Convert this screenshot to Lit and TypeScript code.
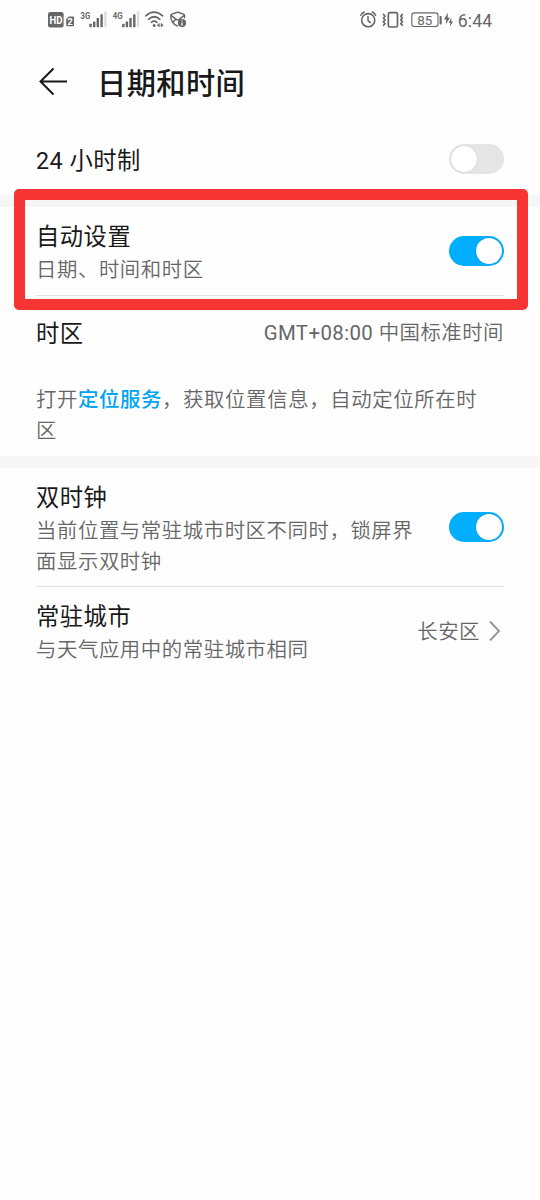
import { LitElement, html, css, svg, nothing } from "lit";
import { customElement, property } from "lit/decorators.js";

@customElement("toggle-switch")
class ToggleSwitch extends LitElement {
  @property({ type: Boolean }) on = false;
  static styles = css`
    :host { display: block; flex: none; }
    .track { box-sizing: border-box; width: 55px; height: 30px; border-radius: 15px; padding: 2px; background: #e5e5e5; display: flex; justify-content: flex-start; }
    .track.on { background: #00aeff; justify-content: flex-end; }
    .knob { width: 26px; height: 26px; border-radius: 50%; background: #fff; box-shadow: 0 0 1.5px rgba(0, 0, 0, 0.18); }
  `;
  render() {
    return html`<div class="track ${this.on ? "on" : ""}"><div class="knob"></div></div>`;
  }
}

@customElement("status-bar")
class StatusBar extends LitElement {
  static styles = css`
    :host { display: block; height: 40px; }
    .bar { display: flex; justify-content: space-between; padding: 0 40px; }
    svg { display: block; }
    text { font-family: Roboto, "Liberation Sans", sans-serif; fill: #666; }
    .inv { fill: #fff; font-weight: 700; }
    .net { font-weight: 700; font-size: 9.8px; }
    .f { fill: #666; }
    .s { fill: none; stroke: #666; stroke-linecap: round; stroke-linejoin: round; }
    .dim { fill: #dcdcdc; }
  `;
  signal(x: number) {
    return svg`<rect class="f" x=${x} y="23.7" width="2.4" height="3.5" rx=".6"/>
      <rect class="f" x=${x + 3.6} y="21.6" width="2.4" height="5.6" rx=".6"/>
      <rect class="f" x=${x + 7.2} y="18" width="2.4" height="9.2" rx=".6"/>
      <rect class="f" x=${x + 11} y="14.2" width="2.4" height="13" rx=".6"/>
      <rect class="dim" x=${x + 14.9} y="11.2" width="2.2" height="16" rx=".6"/>`;
  }
  render() {
    return html`<div class="bar">
      <svg width="150" height="40" viewBox="40 0 150 40">
        <rect class="f" x="48" y="12" width="15.6" height="15.4" rx="2.2"/>
        <text class="inv" x="49.4" y="23.6" font-size="11" textLength="13" lengthAdjust="spacingAndGlyphs">HD</text>
        <path class="f" d="M68.8 16.4h4q1.2 0 1.2 1.2v7.4q0 1.2-1.2 1.2h-5.4q-1.2 0-1.2-1.2v-6z"/>
        <text class="inv" x="70.1" y="25" font-size="9.6" text-anchor="middle">2</text>
        <text class="net" x="80.6" y="18.9" textLength="9.6" lengthAdjust="spacingAndGlyphs">3G</text>
        ${this.signal(89.4)}
        <text class="net" x="112.8" y="18.9" textLength="9.8" lengthAdjust="spacingAndGlyphs">4G</text>
        ${this.signal(122.1)}
        <path class="s" stroke-width="1.7" d="M145.8 15.8Q154.2 8.4 162.6 15.8M148.5 19.3Q154.2 14.2 159.9 19.3M151.4 22.3Q154.2 20 157 22.3"/>
        <circle class="f" cx="154.2" cy="25.6" r="1.5"/>
        <path class="f" d="M159.6 22.8v4.8l-2.7-2.4zM160.8 22.8v4.8l2.7-2.4z"/>
        <path class="s" stroke-width="1.4" d="M177.4 26C173.4 24.2 170.6 20 170.8 15.2Q171 14.4 172 14.1L176.6 12.5Q177.7 12.1 178.8 12.5L183.4 14.1Q184.5 14.5 184.5 15.5V17.6"/>
        <path class="s" stroke-width="1.4" d="M171.4 15.6L176.6 19.6Q177.7 20.3 178.8 19.6L184 15.6M172.6 22.6L175.6 19.4"/>
        <circle class="f" cx="182" cy="23.1" r="4.1"/>
        <path stroke="#fff" stroke-width="1.2" d="M182 20.4v1.2M182 22.4v3.3"/>
      </svg>
      <svg width="150" height="40" viewBox="350 0 150 40">
        <circle class="s" stroke-width="1.6" cx="368.2" cy="20.2" r="6.6"/>
        <path class="s" stroke-width="1.5" d="M368 16.4v4.2l2.3 2M360.8 15.3q1-2.3 3.3-3.3M372.3 12q2.3 1 3.3 3.3"/>
        <rect class="s" stroke-width="1.7" x="388.3" y="12.6" width="9.2" height="14.4" rx="1.6"/>
        <path class="s" stroke-width="1.6" d="M383.5 14.4l1.6 1.8-1.8 1.8 1.8 1.9-1.8 1.9 1.8 1.8-1.6 1.7M402.3 14.4l-1.6 1.8 1.8 1.8-1.8 1.9 1.8 1.9-1.8 1.8 1.6 1.7"/>
        <rect class="s" stroke-width="1.1" x="411.8" y="12.9" width="26.2" height="13.6" rx="2.6"/>
        <text x="417.3" y="24.5" font-size="13.4">85</text>
        <rect class="f" x="439.6" y="16" width="2.1" height="8.4" rx=".7"/>
        <path class="f" d="M447.9 12.8l-3.9 6.6h2.4l-.6 5 4.1-6.6h-2.3z"/>
        <path class="f" d="M451.4 17.6l-2.7 5.1h1.7l-.6 4.1 3.2-5.3h-1.8z"/>
        <text x="457.7" y="26.5" font-size="17.6" textLength="34.4">6:44</text>
      </svg>
    </div>`;
  }
}

@customElement("setting-row")
class SettingRow extends LitElement {
  @property() label = "";
  @property() detail = "";
  static styles = css`
    :host { display: flex; align-items: center; justify-content: space-between; box-sizing: border-box; padding: 0 36px; }
    .text { padding-top: 4px; }
    .label { font-size: 23.3px; letter-spacing: 0.5px; line-height: 35px; color: #191919; }
    .detail { font-size: 20.4px; letter-spacing: 0.57px; line-height: 30.8px; color: #666; font-weight: 350; max-width: 390px; }
  `;
  render() {
    return html`<div class="text">
        <div class="label">${this.label}</div>
        ${this.detail ? html`<div class="detail">${this.detail}</div>` : nothing}
      </div>
      <slot></slot>`;
  }
}

@customElement("app-root")
class AppRoot extends LitElement {
  static styles = css`
    :host { display: block; position: relative; width: 540px; height: 1200px; overflow: hidden; background: #fefefe; font-family: Roboto, "Noto Sans CJK SC", sans-serif; color: #191919; }
    .header { display: flex; align-items: center; height: 83px; padding-left: 38px; }
    .header svg { display: block; margin-right: 29px; }
    .title { font-size: 29.2px; letter-spacing: 0.45px; font-weight: 500; line-height: 44px; padding-top: 4px; }
    .band { height: 12px; background: #f6f6f6; }
    .line { height: 1px; margin: 0 36px; background: #e2e2e2; }
    .short { height: 72px; }
    .two { height: 88px; }
    .three { height: 118px; }
    .value { font-size: 20.4px; letter-spacing: 0.5px; line-height: 30px; color: #666; font-weight: 350; display: flex; align-items: center; padding-top: 1px; }
    .value svg { display: block; margin: -1px 0 0 8px; }
    .zone { font-weight: 400; letter-spacing: 0.4px; white-space: pre; }
    .note { height: 88px; box-sizing: border-box; padding: 17px 50px 0 36px; font-size: 20.4px; letter-spacing: 0.62px; line-height: 30.8px; color: #666; font-weight: 350; }
    .link { color: #00a4f5; font-weight: 500; }
    .mark { position: absolute; box-sizing: border-box; left: 14px; top: 189px; width: 514px; height: 121px; border: 11px solid #f73434; border-radius: 5px; }
  `;
  render() {
    return html`
      <status-bar></status-bar>
      <div class="header">
        <svg width="30" height="30" viewBox="0 0 30 30" fill="none" stroke="#191919" stroke-width="2">
          <path d="M29 14.5H3M15.5 1.5L2.5 14.5L15.5 27.5"/>
        </svg>
        <div class="title">日期和时间</div>
      </div>
      <setting-row class="short" label="24 小时制"><toggle-switch></toggle-switch></setting-row>
      <div class="band"></div>
      <setting-row class="two" label="自动设置" detail="日期、时间和时区"><toggle-switch on></toggle-switch></setting-row>
      <div class="line"></div>
      <setting-row class="short" label="时区"><div class="value"><span class="zone">GMT+08:00 </span>中国标准时间</div></setting-row>
      <div class="note">打开<span class="link">定位服务</span>，获取位置信息，自动定位所在时区</div>
      <div class="band"></div>
      <setting-row class="three" label="双时钟" detail="当前位置与常驻城市时区不同时，锁屏界面显示双时钟"><toggle-switch on></toggle-switch></setting-row>
      <div class="line"></div>
      <setting-row class="two" label="常驻城市" detail="与天气应用中的常驻城市相同">
        <div class="value">长安区
          <svg width="16" height="22" viewBox="0 0 16 22" fill="none" stroke="#999" stroke-width="2"><path d="M2 1.5L11 11L2 20.5"/></svg>
        </div>
      </setting-row>
      <div class="mark"></div>
    `;
  }
}
